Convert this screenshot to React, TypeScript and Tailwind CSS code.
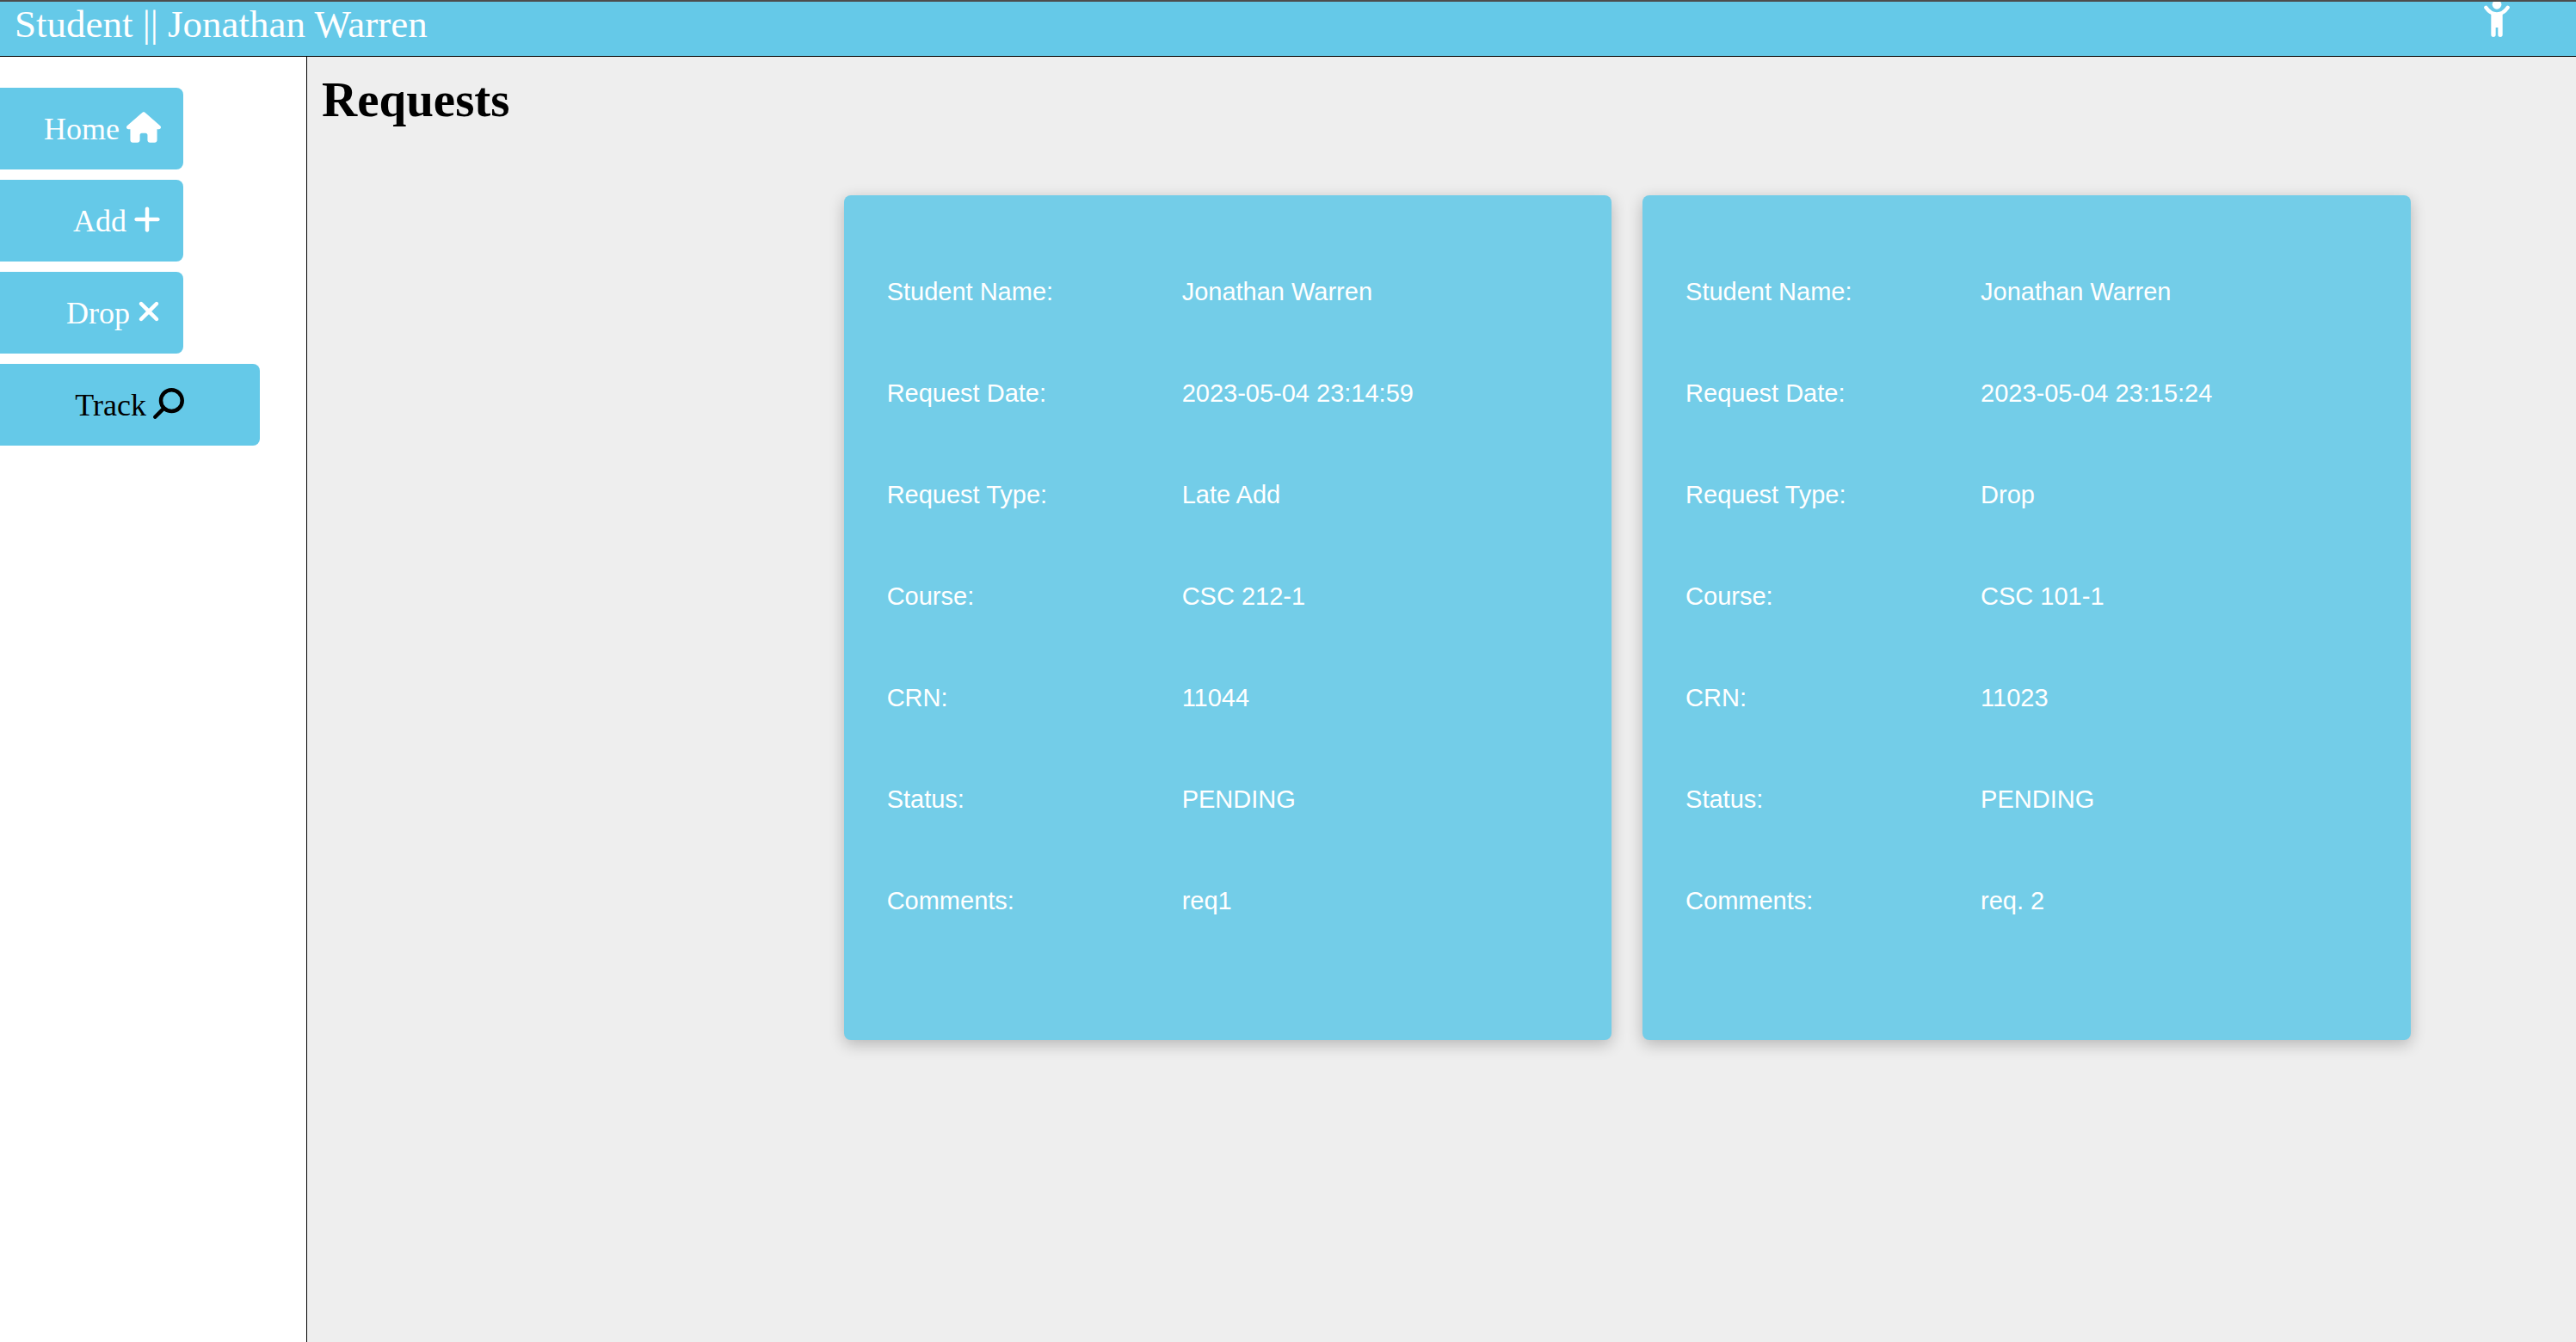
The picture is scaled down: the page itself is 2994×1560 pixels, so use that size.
import React from "react";
import { FaHouse, FaPlus, FaXmark, FaMagnifyingGlass } from "react-icons/fa6";

type Request = { id: string; fields: [string, string][] };

const requests: Request[] = [
  {
    id: "11044",
    fields: [
      ["Student Name:", "Jonathan Warren"],
      ["Request Date:", "2023-05-04 23:14:59"],
      ["Request Type:", "Late Add"],
      ["Course:", "CSC 212-1"],
      ["CRN:", "11044"],
      ["Status:", "PENDING"],
      ["Comments:", "req1"],
    ],
  },
  {
    id: "11023",
    fields: [
      ["Student Name:", "Jonathan Warren"],
      ["Request Date:", "2023-05-04 23:15:24"],
      ["Request Type:", "Drop"],
      ["Course:", "CSC 101-1"],
      ["CRN:", "11023"],
      ["Status:", "PENDING"],
      ["Comments:", "req. 2"],
    ],
  },
];

const link =
  "flex h-[95px] items-center justify-end gap-2 rounded-r-lg bg-[#65c9e8] text-[36px] leading-10";

function PersonIcon() {
  return (
    <svg viewBox="51 6 90 126" className="h-[42px] w-[30px]" fill="currentColor" aria-hidden="true">
      <circle cx="96" cy="16" r="16" />
      <path
        d="M58 26C67 39 80 49 96 49C112 49 125 39 134 26"
        fill="none"
        stroke="currentColor"
        strokeWidth="13"
        strokeLinecap="round"
      />
      <path d="M76 45H116V121a8 8 0 0 1-16 0V96H92V121a8 8 0 0 1-16 0Z" />
    </svg>
  );
}

export default function App() {
  return (
    <div className="flex min-h-screen flex-col font-['Liberation_Serif',serif]">
      <header className="flex h-[66px] items-start justify-between border-t-2 border-b border-t-[#4d4d4d] border-b-black bg-[#65c9e8] pr-[77px] pl-[17px] text-white">
        <p className="text-[45px] leading-[52px]">Student || Jonathan Warren</p>
        <button type="button" aria-label="Account">
          <PersonIcon />
        </button>
      </header>
      <div className="flex flex-1">
        <nav className="flex w-[357px] shrink-0 flex-col items-start gap-3 border-r border-black bg-white pt-9">
          <a href="#home" className={link + " w-[213px] pr-[26px] text-white"}>
            Home <FaHouse className="mb-1 h-9 w-10" />
          </a>
          <a href="#add" className={link + " w-[213px] pr-[26px] text-white"}>
            Add <FaPlus className="mb-1 h-9 w-8" />
          </a>
          <a href="#drop" className={link + " w-[213px] pr-[26px] text-white"}>
            Drop <FaXmark className="mb-1 h-9 w-7" />
          </a>
          <a href="#track" aria-current="page" className={link + " w-[302px] pr-[88px] text-black"}>
            Track <FaMagnifyingGlass className="mb-1 size-9 -scale-x-100" />
          </a>
        </nav>
        <main className="flex-1 bg-[#eeeeee]">
          <h1 className="pt-4 pl-[17px] text-[57px] leading-[68px] font-bold">Requests</h1>
          <div className="mt-[77px] mr-[7.3%] ml-[23.65%] grid grid-cols-2 gap-9">
            {requests.map((r) => (
              <dl
                key={r.id}
                className="rounded-lg bg-[#73cde8] px-[50px] pt-[54px] pb-[102px] font-['Liberation_Sans',Arial,sans-serif] text-[29px] text-white shadow-[0_5px_18px_rgba(0,0,0,0.24)]"
              >
                {r.fields.map(([label, value]) => (
                  <div key={label} className="flex h-[118px] items-center">
                    <dt className="w-[343px] shrink-0">{label}</dt>
                    <dd>{value}</dd>
                  </div>
                ))}
              </dl>
            ))}
          </div>
        </main>
      </div>
    </div>
  );
}
